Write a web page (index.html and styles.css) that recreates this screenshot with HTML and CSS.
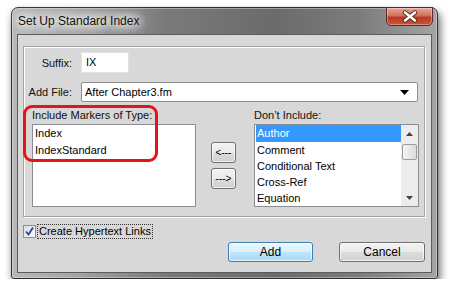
FILE: index.html
```html
<!DOCTYPE html>
<html>
<head>
    <title>Set Up Standard Index</title>
    <link rel="stylesheet" href="styles.css">
</head>
<body>
    <div class="window">
        <div class="titlebar">
            <span class="title">Set Up Standard Index</span>
            <span class="close">
                <svg width="18" height="13" viewBox="0 0 18 13">
                    <path d="M4 2.5 L14 10.5 M14 2.5 L4 10.5" stroke="#4a2a26" stroke-width="4.4" stroke-linecap="round"/>
                    <path d="M4 2.5 L14 10.5 M14 2.5 L4 10.5" stroke="#fff" stroke-width="2.6" stroke-linecap="round"/>
                </svg>
            </span>
        </div>

        <div class="client">
            <div class="group">
                <div class="field-row">
                    <label class="field-label">Suffix:</label>
                    <div class="textbox">IX</div>
                </div>
                <div class="field-row">
                    <label class="field-label">Add File:</label>
                    <div class="select">
                        <span>After Chapter3.fm</span>
                        <svg width="9" height="5" viewBox="0 0 9 5"><path d="M0 0 H9 L4.5 5 Z" fill="#000"/></svg>
                    </div>
                </div>

                <div class="lists">
                    <div class="list-col left-col">
                        <div class="list-label">Include Markers of Type:</div>
                        <div class="listbox">
                            <div class="items">
                                <div class="item">Index</div>
                                <div class="item">IndexStandard</div>
                            </div>
                        </div>
                        <div class="highlight"></div>
                    </div>

                    <div class="move-btns">
                        <button class="btn small">&lt;---</button>
                        <button class="btn small">---&gt;</button>
                    </div>

                    <div class="list-col right-col">
                        <div class="list-label">Don’t Include:</div>
                        <div class="listbox">
                            <div class="items">
                                <div class="item selected">Author</div>
                                <div class="item">Comment</div>
                                <div class="item">Conditional Text</div>
                                <div class="item">Cross-Ref</div>
                                <div class="item">Equation</div>
                            </div>
                            <div class="scrollbar">
                                <div class="arrow">
                                    <svg width="7" height="4" viewBox="0 0 7 4"><path d="M0 4 L3.5 0 L7 4 Z" fill="#444"/></svg>
                                </div>
                                <div class="thumb"></div>
                                <div class="track"></div>
                                <div class="arrow">
                                    <svg width="7" height="4" viewBox="0 0 7 4"><path d="M0 0 L3.5 4 L7 0 Z" fill="#444"/></svg>
                                </div>
                            </div>
                        </div>
                    </div>
                </div>
            </div>

            <div class="check-row">
                <span class="checkbox">
                    <svg width="11" height="11" viewBox="0 0 11 11"><path d="M2 5.5 L4.5 8.5 L9 1.5" fill="none" stroke="#2b3fa6" stroke-width="1.8"/></svg>
                </span>
                <span class="check-label">Create Hypertext Links</span>
            </div>

            <div class="actions">
                <button class="btn default">Add</button>
                <button class="btn">Cancel</button>
            </div>
        </div>
    </div>
</body>
</html>
```

FILE: styles.css
```css
* {
    box-sizing: border-box;
}
body {
    margin: 0;
    background-color: #fff;
    font-family: "Liberation Sans", Arial, sans-serif;
    font-size: 11px;
    color: #000;
}
.window {
    margin: 7px 0 0 11px;
    width: 427px;
    height: 272px;
    display: flex;
    flex-direction: column;
    padding: 0 5px 5px;
    border: 1px solid #2e2e2e;
    border-radius: 7px 7px 3px 3px;
    background: linear-gradient(90deg, #b8b8b8 0%, #a6a6a6 14%, #7a7a7a 36%, #6b6b6b 62%, #7c7c7c 82%, #a4a4a4 100%);
    box-shadow: 2px 5px 9px rgba(0,0,0,0.6), inset 0 0 0 1px rgba(255,255,255,0.35);
}
.titlebar {
    height: 26px;
    display: flex;
    align-items: flex-start;
}
.title {
    padding-left: 1px;
    line-height: 26px;
    font-size: 12px;
    color: #111;
    text-shadow: 0 0 8px #fff, 0 0 8px #fff, 0 0 12px #fff, 0 0 16px #fff, 0 0 20px #fff;
}
.close {
    margin: -1px -1px 0 auto;
    width: 47px;
    height: 19px;
    display: flex;
    align-items: center;
    justify-content: center;
    border: 1px solid #5a2a22;
    border-radius: 0 0 5px 5px;
    background: linear-gradient(#e6a596 0%, #d4705c 45%, #b93a22 55%, #c8553c 100%);
    box-shadow: inset 0 0 0 1px rgba(255,255,255,0.35);
}
.client {
    flex: 1;
    padding: 11px 6px 0 5px;
    background-color: #d8d8d8;
    border: 1px solid #5c5c5c;
}
.group {
    height: 171px;
    padding-top: 5px;
    border: 1px solid #a3a3a3;
    box-shadow: inset 1px 1px 0 #fff, 1px 1px 0 #fff;
}
.field-row {
    display: grid;
    grid-template-columns: 48px auto;
    column-gap: 9px;
    align-items: center;
    justify-content: start;
}
.field-row + .field-row {
    margin-top: 9px;
}
.field-label {
    text-align: right;
    color: #111;
}
.textbox {
    width: 48px;
    height: 21px;
    padding: 3px 4px;
    background-color: #fff;
    border: 1px solid #e2e2e2;
    line-height: 13px;
}
.select {
    width: 337px;
    height: 20px;
    display: flex;
    align-items: center;
    justify-content: space-between;
    padding: 0 8px 0 3px;
    background-color: #fff;
    border: 1px solid #8d8d8d;
    border-radius: 2px;
}
.lists {
    display: flex;
    margin: 6px 0 0 8px;
}
.list-col {
    position: relative;
}
.left-col {
    width: 164px;
}
.right-col {
    width: 165px;
}
.list-label {
    line-height: 14px;
    margin-bottom: 2px;
    color: #111;
}
.listbox {
    height: 83px;
    display: flex;
    background-color: #fff;
    border: 1px solid #8a8d94;
}
.items {
    flex: 1;
    padding: 0 0 0 1px;
}
.item {
    line-height: 16px;
    padding-left: 1px;
}
.item:first-child {
    line-height: 17px;
}
.item.selected {
    background-color: #3399ff;
    color: #fff;
}
.highlight {
    position: absolute;
    left: -9px;
    top: -3px;
    width: 135px;
    height: 57px;
    border: 3px solid #e3151b;
    border-radius: 9px;
}
.move-btns {
    display: flex;
    flex-direction: column;
    gap: 5px;
    padding-top: 34px;
    margin: 0 18px 0 15px;
}
.scrollbar {
    width: 17px;
    display: flex;
    flex-direction: column;
    align-items: center;
    background-color: #ececec;
}
.arrow {
    height: 17px;
    display: flex;
    align-items: center;
    justify-content: center;
}
.thumb {
    width: 15px;
    height: 16px;
    margin-top: 2px;
    border: 1px solid #9a9a9a;
    border-radius: 2px;
    background: linear-gradient(90deg, #f4f4f4, #dcdcdc);
}
.track {
    flex: 1;
}
.check-row {
    display: flex;
    align-items: center;
    margin-top: 8px;
    height: 13px;
}
.checkbox {
    width: 13px;
    height: 13px;
    display: flex;
    align-items: center;
    justify-content: center;
    border: 1px solid #8e8f8f;
    background: linear-gradient(135deg, #dcdcdc, #fafafa);
}
.check-label {
    margin-left: 2px;
    padding: 0 1px;
    line-height: 13px;
    outline: 1px dotted #333;
}
.actions {
    display: flex;
    justify-content: flex-end;
    gap: 26px;
    margin-top: 4px;
}
.btn {
    width: 86px;
    height: 20px;
    padding: 0;
    font-family: inherit;
    font-size: 12px;
    color: #000;
    border: 1px solid #707070;
    border-radius: 3px;
    background: linear-gradient(#f2f2f2 0%, #ebebeb 50%, #dddddd 51%, #cfcfcf 100%);
    box-shadow: inset 0 0 0 1px rgba(255,255,255,0.7);
}
.btn.default {
    width: 85px;
    border-color: #3c7fb1;
    background: linear-gradient(#eaf6fd 0%, #d9f0fc 50%, #bee6fd 51%, #a7d9f5 100%);
}
.btn.small {
    width: 25px;
    height: 21px;
    font-size: 10px;
}
```
